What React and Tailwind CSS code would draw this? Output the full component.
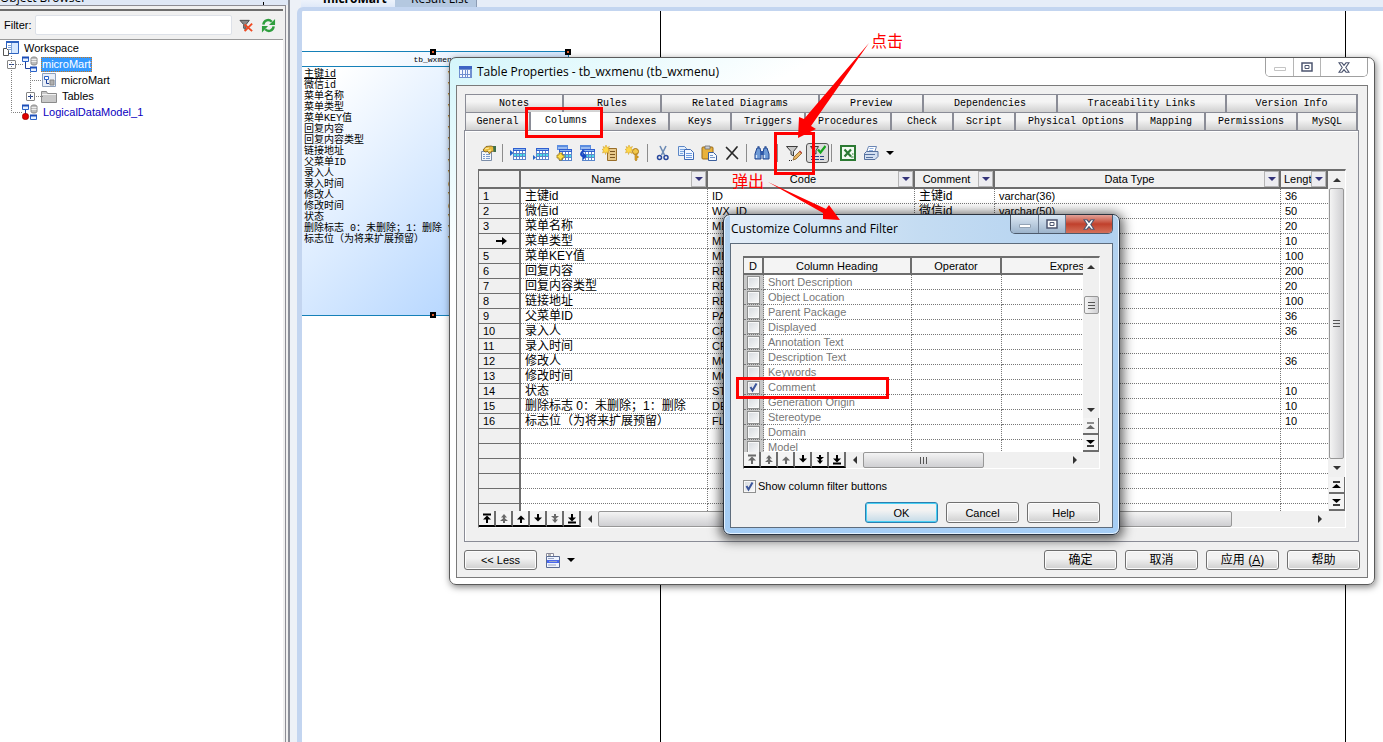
import { useState } from 'react'
import clsx from 'clsx'

const sans = "font-['Liberation_Sans','Noto_Sans_CJK_SC',sans-serif]"
const mono = "font-['Liberation_Mono','Noto_Sans_CJK_SC',monospace]"
const title = "font-['Open_Sans','Noto_Sans_CJK_SC',sans-serif]"

const entityRows = [
  ['主键id', 'varchar(36)'],
  ['微信id', 'varchar(50)'],
  ['菜单名称', 'varchar(20)'],
  ['菜单类型', 'varchar(10)'],
  ['菜单KEY值', 'varchar(100)'],
  ['回复内容', 'varchar(200)'],
  ['回复内容类型', 'varchar(20)'],
  ['链接地址', 'varchar(100)'],
  ['父菜单ID', 'varchar(36)'],
  ['录入人', 'varchar(36)'],
  ['录入时间', 'datetime'],
  ['修改人', 'varchar(36)'],
  ['修改时间', 'datetime'],
  ['状态', 'varchar(10)'],
  ['删除标志 0：未删除；1：删除', 'varchar(10)'],
  ['标志位（为将来扩展预留）', 'varchar(10)'],
]

const codes = [
  'ID', 'WX_ID', 'MENU_NAME', 'MENU_TYPE', 'MENU_KEY', 'REPLY_CONTENT', 'REPLY_TYPE', 'RES_URL',
  'PARENT_ID', 'CREATOR', 'CREATE_TIME', 'MODIFIER', 'MODIFY_TIME', 'STATUS', 'DEL_FLAG', 'FLAG',
]
const lengths = ['36', '50', '20', '10', '100', '200', '20', '100', '36', '36', '', '36', '', '10', '10', '10']

const filterRows = [
  'Short Description', 'Object Location', 'Parent Package', 'Displayed', 'Annotation Text', 'Description Text',
  'Keywords', 'Comment', 'Generation Origin', 'Stereotype', 'Domain', 'Model',
]

const topTabs = ['Notes', 'Rules', 'Related Diagrams', 'Preview', 'Dependencies', 'Traceability Links', 'Version Info']
const bottomTabs = [
  'General', 'Columns', 'Indexes', 'Keys', 'Triggers', 'Procedures', 'Check', 'Script',
  'Physical Options', 'Mapping', 'Permissions', 'MySQL',
]

function Svg({ children, size = 16 }) {
  return (
    <svg width={size} height={size} viewBox="0 0 16 16" className="block shrink-0" fill="none">
      {children}
    </svg>
  )
}

function GridShape({ x = 0, y = 0, w = 13, h = 12, fill = '#fff' }) {
  return (
    <g shapeRendering="crispEdges">
      <rect x={x} y={y} width={w} height={h} fill="#5a86cc" />
      <rect x={x} y={y} width={w} height={3} fill="#2f5fd0" />
      <rect x={x + 1} y={y + 1} width={w - 2} height={1} fill="#8db8f0" />
      {[0, 1, 2].map((r) =>
        [0, 1, 2, 3].map((c) => (
          <rect key={`${r}-${c}`} x={x + 1 + c * 3} y={y + 3 + r * 3} width={2} height={2} fill={r === 1 ? fill : '#fff'} />
        ))
      )}
    </g>
  )
}

const star = 'M4 0l1 2.5L7.500 1.500 6 4l2 1-2 1 1 2.500L4.500 7 3.500 9.500 3 7 .5 8l1-2.500L0 4.500l2-.8L1 1.500l2 1z'

const icons = {
  table: (
    <g shapeRendering="crispEdges">
      <rect x="1" y="2" width="14" height="13" fill="#6f8fd0" />
      <rect x="1" y="2" width="14" height="3" fill="#3c64c4" />
      {[6, 9, 12].map((y) => [2, 5, 8, 11].map((x) => <rect key={`${x}-${y}`} x={x} y={y} width="2" height="2" fill="#f4f8ff" />))}
    </g>
  ),
  props: (
    <>
      <path d="M1.500 6.500h10v9h-10z" fill="#f4f7fb" stroke="#7b8da8" />
      <path d="M3 9.500h2M6 9.500h4M3 11.500h2M6 11.500h4M3 13.500h2M6 13.500h4" stroke="#7c9ccc" />
      <path d="M3 5l3-3.500 5-.5 3.500 1v4l-3 .5-2 2.500L8 6.500 5 7z" fill="#e8b93a" stroke="#7a5a14" strokeWidth=".8" />
      <path d="M5 4l4-1M8 6l3-1" stroke="#fff0a8" />
      <path d="M13 1h3v6h-2.500z" fill="#3f6f4a" />
    </>
  ),
  insert: (
    <>
      <GridShape x={3} y={3} fill="#4fe0e8" />
      <path d="M0 5l3.500 3L0 11z" fill="#2463c8" />
    </>
  ),
  append: (
    <>
      <GridShape x={3} y={3} fill="#4fe0e8" />
      <path d="M0 10l3 2.500L0 15z" fill="#2463c8" />
    </>
  ),
  addCols: (
    <>
      <path d="M1 0h11v5H1z" fill="#5b8de0" />
      <path d="M2 3h9" stroke="#dceaff" />
      <GridShape x={3} y={4} fill="#4fe0e8" />
      <path d="M3 8h3v2h2v3H6v2H3v-2H1v-3h2z" fill="#ffe14a" stroke="#9a7410" strokeWidth=".8" />
    </>
  ),
  replicate: (
    <>
      <path d="M1 0h11v5H1z" fill="#5b8de0" />
      <path d="M2 3h9" stroke="#dceaff" />
      <GridShape x={3} y={4} fill="#4fe0e8" />
      <path d="M5 5C0 6 0 12 4 12v3l4-4-4-3.500v2.500C2.500 10 3 7 6 7z" fill="#1a49c4" />
    </>
  ),
  newDomain: (
    <>
      <path d="M6.500 3.500h8v12h-9v-8z" fill="#e7c98c" stroke="#9a6f2a" />
      <path d="M8 6.500h5M8 9.500h5M8 12.500h5" stroke="#7a5520" />
      <path d={star} fill="#ffd94a" stroke="#d09a18" strokeWidth=".5" />
    </>
  ),
  newKey: (
    <>
      <circle cx="10.500" cy="6.500" r="3" fill="#f2c84a" stroke="#a8761a" />
      <path d="M10 9h2v6l-1 1-1-1z" fill="#e0a92a" stroke="#a8761a" strokeWidth=".6" />
      <path d="M12 11h1.500v2H12z" fill="#c8901a" />
      <path d={star} fill="#ffd94a" stroke="#d09a18" strokeWidth=".5" />
    </>
  ),
  cut: (
    <>
      <path d="M5 1l4.500 9M11 1L6.500 10" stroke="#6d8bb5" strokeWidth="1.600" />
      <circle cx="4.500" cy="12.500" r="2" stroke="#27479c" strokeWidth="1.500" />
      <circle cx="11" cy="12.500" r="2" stroke="#27479c" strokeWidth="1.500" />
    </>
  ),
  copy: (
    <>
      <path d="M.5 1.500h6l2 2v7h-8z" fill="#e4effd" stroke="#5d87c6" />
      <path d="M2 4.500h4M2 6.500h4M2 8.500h3" stroke="#7ba6e0" />
      <path d="M6.500 4.500h6l3 3v7h-9z" fill="#f2f7ff" stroke="#3c69b4" />
      <path d="M8 8.500h6M8 10.500h6M8 12.500h6" stroke="#6f9ce0" />
    </>
  ),
  paste: (
    <>
      <rect x="1" y="2" width="11" height="12" rx="1" fill="#e9b23c" stroke="#9b6a16" />
      <path d="M4 1h5v3H4z" fill="#c9ced6" stroke="#6c6c6c" strokeWidth=".8" />
      <path d="M7.500 7.500h5l3 3v5h-8z" fill="#f3f8ff" stroke="#3c5f9c" />
      <path d="M9 10.500h3M9 12.500h5" stroke="#7596c8" />
    </>
  ),
  remove: <path d="M2.500 2.500l11 11M13 2L3 14" stroke="#2a2a2a" strokeWidth="1.700" strokeLinecap="round" />,
  find: (
    <>
      <path d="M3 3h3l1 5v6H1V9zM10 3h3l2 6v5H9V8z" fill="#6e9ad6" stroke="#1f4590" />
      <path d="M6.500 6h3v4h-3z" fill="#2d57a8" />
      <path d="M3.500 2h2M10.500 2h2" stroke="#1f4590" strokeWidth="1.500" />
      <path d="M2.500 10v3M10.500 10v3" stroke="#d7e7fb" strokeWidth="1.300" />
    </>
  ),
  filterEdit: (
    <>
      <path d="M.5 1.500h11L7.500 6.500V11L5 9.500v-3z" fill="#c8c8c8" stroke="#3c3c3c" />
      <path d="M14 6l2 2-6 6-3 1 1-3z" fill="#e9b765" stroke="#8a5a1a" strokeWidth=".8" />
      <path d="M13.500 6l2 2" stroke="#c04848" strokeWidth="1.500" />
      <path d="M3 15.500h1M5 15.500h1" stroke="#222" />
    </>
  ),
  filterOn: (
    <>
      <path d="M.5 1.500h8L6 5.500V9L3.500 8V5.500z" fill="#c8c8c8" stroke="#3c3c3c" />
      <path d="M8 4.500l2.500 3L15.500 1" stroke="#16a51c" strokeWidth="2.200" />
      <path d="M1 11.500h3M5 11.500h4M10 11.500h4M1 14.500h3M5 14.500h4M10 14.500h4" stroke="#2b4684" />
    </>
  ),
  excel: (
    <>
      <rect x="1" y="1" width="14" height="14" fill="#f3faf2" stroke="#2c7a33" strokeWidth="2" />
      <path d="M4.500 4.500l6.500 7M11 4.500l-6.500 7" stroke="#2c7a33" strokeWidth="2.200" />
      <path d="M11 12h2.500M12 9h1.500" stroke="#2c7a33" />
    </>
  ),
  print: (
    <>
      <path d="M5.500 1.500h8l-2 6h-8z" fill="#fff" stroke="#6b86b4" />
      <path d="M6.500 3.500h4M6 5.500h4" stroke="#8fb0e0" />
      <path d="M1.500 8.500l2-2h11.500v5l-3 3h-10.500z" fill="#d3dff1" stroke="#55719f" />
      <path d="M2 9.500h10M3 12.500h7" stroke="#55719f" />
    </>
  ),
  model: (
    <>
      <path d="M9 2.500c0-2 6-2 6 0v5c0 2-6 2-6 0z" fill="#bdbdbd" stroke="#8a8a8a" />
      <path d="M9.500 3.500h5M9.500 5.500h5" stroke="#eee" />
      <path d="M.5 1.500h6v4h-6zM8.500 11.500h6v4h-6z" fill="#e8f2ff" stroke="#2a62c8" />
      <path d="M0 1.500h7M8 11.500h7" stroke="#1e4fb8" strokeWidth="2" />
      <path d="M3.500 6v6.500H8" stroke="#1e3f98" />
    </>
  ),
  logical: (
    <>
      <path d="M9 2.500c0-2 6-2 6 0v5c0 2-6 2-6 0z" fill="#bdbdbd" stroke="#8a8a8a" />
      <path d="M9.500 3.500h5M9.500 5.500h5" stroke="#eee" />
      <path d="M.5 1.500h6v4h-6zM8.500 11.500h6v4h-6z" fill="#e8f2ff" stroke="#2a62c8" />
      <path d="M0 1.500h7M8 11.500h7" stroke="#1e4fb8" strokeWidth="2" />
      <path d="M3.500 6v4" stroke="#1e3f98" />
      <circle cx="3.500" cy="12.500" r="3.200" fill="#e00000" stroke="#8a0000" strokeWidth=".6" />
    </>
  ),
  workspace: (
    <>
      <path d="M3.500 1.500h12v12h-12z" fill="#d6e8ff" stroke="#2e63c0" />
      <path d="M3 2h13" stroke="#2e63c0" strokeWidth="2" />
      <path d="M4 3h4v10H4z" fill="#fff" />
      <path d="M5 5.500h3M5 7.500h3M5 9.500h3M8.500 3v10" stroke="#7ea3d8" />
      <path d="M.5 8.500h3l2 2v5h-5z" fill="#fff" stroke="#555" />
    </>
  ),
  diagram: (
    <>
      <path d="M1.500 1.500h13v13h-13z" fill="#e9eff8" stroke="#8da0bc" />
      <path d="M3.500 4.500h4v3h-4z" fill="#fff" stroke="#2a62c8" />
      <path d="M5.500 8v3.500H8" stroke="#1e3f98" />
      <path d="M9 8h4v5H9z" fill="#b0b0b0" stroke="#888" />
    </>
  ),
  folder: (
    <>
      <path d="M.5 3.500h5l1 2h9v9h-15z" fill="#c9c9c9" stroke="#8b8b8b" />
      <path d="M1 6.500h14" stroke="#f2f2f2" />
    </>
  ),
  filterClear: (
    <>
      <path d="M1 2.500h10L7.500 7v6L5 11V7z" fill="#8a8a8a" stroke="#444" />
      <path d="M6 7l8 7M14 6l-8 8" stroke="#f04a22" strokeWidth="2" />
    </>
  ),
  refresh: (
    <>
      <path d="M2.500 7C3 2.500 8 .5 11.500 4" stroke="#2f9e3e" strokeWidth="2.600" />
      <path d="M15 1v6.500H8.500z" fill="#2f9e3e" />
      <path d="M13.500 9c-.5 4.500-5.500 6.500-9 3" stroke="#2f9e3e" strokeWidth="2.600" />
      <path d="M1 15.500V8.500h6.500z" fill="#2f9e3e" />
    </>
  ),
  menu: (
    <>
      <path d="M1.500 1.500h7v3h-7z" fill="#fff" stroke="#8a8a9a" />
      <path d="M1.500 4.500h13v11h-13z" fill="#eef3ff" stroke="#5a6c94" />
      <path d="M2 9.500h12" stroke="#4a68f0" strokeWidth="3" />
      <path d="M3 6.500h6M4 9.500h8M3 13h8" stroke="#9aa6c4" />
      <path d="M3 3h3" stroke="#666" />
    </>
  ),
}

function Icon({ name, size }) {
  return <Svg size={size}>{icons[name]}</Svg>
}

// filled triangle, points down unless told otherwise
function Caret({ dir = 'down', color = '#333' }) {
  const d = { down: 'M0 2h8l-4 4z', up: 'M0 6h8l-4-4z', left: 'M6 0v8l-4-4z', right: 'M2 0v8l4-4z' }[dir]
  return (
    <svg width="8" height="8" viewBox="0 0 8 8" className="block shrink-0">
      <path d={d} fill={color} />
    </svg>
  )
}

const navPaths = {
  first: 'M1 1.500h8M5 10V6',
  pageUp: 'M5 10V3',
  up: 'M5 10V5',
  down: 'M5 1v5',
  pageDown: 'M5 1v7',
  last: 'M1 9.500h8M5 1v4',
}
const navHeads = {
  first: 'M1 6.500h8L5 2.500z',
  pageUp: 'M2 4.500h6L5 1zM1 8h8L5 4.500z',
  up: 'M1 6.500h8L5 2.500z',
  down: 'M1 4.500h8L5 8.500z',
  pageDown: 'M1 3h8L5 6.500zM2 6.500h6L5 10z',
  last: 'M1 4.500h8L5 8.500z',
}

function NavButton({ kind, dim }) {
  const color = dim ? '#6a6a6a' : '#000'
  return (
    <button
      aria-label={kind}
      className="flex h-4 w-[17px] shrink-0 items-center justify-center border-r-2 border-b-2 border-[#6d6d6d] border-b-black bg-[#f4f4f4]"
    >
      <svg width="10" height="11" viewBox="0 0 10 11">
        <path d={navPaths[kind]} stroke={color} strokeWidth="2" />
        <path d={navHeads[kind]} fill={color} />
      </svg>
    </button>
  )
}

function JumpButton({ dir, dim }) {
  const color = dim ? '#6a6a6a' : '#000'
  return (
    <button
      aria-label={dir}
      className="flex h-[17px] w-4 shrink-0 items-center justify-center border-r border-b-2 border-[#6d6d6d] bg-[#f4f4f4]"
    >
      <svg width="9" height="8" viewBox="0 0 9 8">
        <path d={dir === 'top' ? 'M1 1h7' : 'M1 7h7'} stroke={color} strokeWidth="1.500" />
        <path d={dir === 'top' ? 'M0 7h9L4.500 3z' : 'M0 1h9L4.500 5z'} fill={color} />
      </svg>
    </button>
  )
}

function Grip({ vertical }) {
  return (
    <svg width="9" height="9" viewBox="0 0 9 9" className={vertical ? '' : 'rotate-90'}>
      <path d="M1 1.500h7M1 4.500h7M1 7.500h7" stroke="#555" />
    </svg>
  )
}

function NavBar({ dims = [], children }) {
  return (
    <div className="flex h-4 min-w-0 bg-[#f0f0f0]">
      {['first', 'pageUp', 'up', 'down', 'pageDown', 'last'].map((k, i) => (
        <NavButton key={k} kind={k} dim={dims.includes(i)} />
      ))}
      {children}
    </div>
  )
}

function PushButton({ children, primary }) {
  return (
    <button
      className={clsx(
        'flex w-[73px] items-center justify-center rounded-[3px] border bg-linear-to-b from-[#f2f2f2] from-40%',
        primary
          ? 'border-[#2c7fb0] to-[#c4dbe8] shadow-[inset_0_0_0_1px_#48d0f4]'
          : 'border-[#707070] to-[#cfcfcf] shadow-[inset_0_0_0_1px_#fcfcfc]'
      )}
    >
      {children}
    </button>
  )
}

function Check({ id, label, defaultChecked }) {
  return (
    <span className="relative block size-[13px] shrink-0">
      <input
        id={id}
        type="checkbox"
        aria-label={label}
        defaultChecked={defaultChecked}
        className="peer block size-[13px] appearance-none border border-[#8e8f8f] bg-linear-to-br from-[#d5d9de] to-[#fafafa] shadow-[inset_0_0_0_1px_#f8f8f8]"
      />
      <svg viewBox="0 0 13 13" className="pointer-events-none absolute inset-0 hidden peer-checked:block">
        <path d="M3.500 6l2 3.500L9.500 2.500" stroke="#3b559b" strokeWidth="2" fill="none" />
      </svg>
    </span>
  )
}

function CaptionButtons({ danger }) {
  const cell = 'flex items-center justify-center border-r'
  return (
    <div
      className={clsx(
        'flex h-[19px] self-start overflow-hidden rounded-b-[5px] border border-t-0',
        danger ? 'border-[#4c5a6c]' : 'border-[#a0a0a0]'
      )}
    >
      <button
        aria-label="Minimize"
        className={clsx(cell, 'w-7', danger ? 'border-[#6a7a90] bg-linear-to-b from-[#dce8f4] to-[#9db4cc]' : 'border-[#b5b5b5] bg-white')}
      >
        <svg width="12" height="4" className="mt-1"><path d="M.5.5h11v3H.5z" fill="#fff" stroke={danger ? '#93a3b5' : '#c4c4c4'} /></svg>
      </button>
      <button
        aria-label="Maximize"
        className={clsx(cell, 'w-[27px]', danger ? 'border-[#6a7a90] bg-linear-to-b from-[#dce8f4] to-[#9db4cc]' : 'border-[#b5b5b5] bg-white')}
      >
        <svg width="12" height="10"><path d="M1 1h10v8H1z" fill="#fff" stroke="#4d5670" strokeWidth="1.500" /><path d="M4 3.500h4v3H4z" stroke="#4d5670" fill="none" /></svg>
      </button>
      <button
        aria-label="Close"
        className={clsx('flex w-[46px] items-center justify-center', danger ? 'bg-linear-to-b from-[#e2a198] via-[#c0402c] to-[#d4705a]' : 'bg-white')}
      >
        <svg width="12" height="11" viewBox="0 0 12 11">
          <path d="M1 .8h3l2 2.500L8 .8h3L7.800 5.500 11 10.200H8L6 7.700l-2 2.500H1L4.200 5.500z" fill="#fff" stroke="#4d5670" strokeWidth="1.100" />
        </svg>
      </button>
    </div>
  )
}

function TreeRow({ children, pad }) {
  return <li className={clsx('flex h-4 items-center', pad)}>{children}</li>
}

function Expander({ open }) {
  return (
    <button aria-label={open ? 'Collapse' : 'Expand'} className="flex size-[9px] shrink-0 items-center justify-center rounded-[1px] border border-[#848484] bg-white">
      <svg width="7" height="7">
        <path d={open ? 'M1 3.500h5' : 'M1 3.500h5M3.500 1v5'} stroke="#23408c" />
      </svg>
    </button>
  )
}

function ObjectBrowser() {
  return (
    <aside className="flex w-[290px] shrink-0 flex-col border-r-2 border-[#8a8e98] bg-[#f0f0f0]">
      <div className={`flex h-[5px] items-end justify-between overflow-hidden bg-[#dfe8f6] ${title}`}>
        <span className="text-xs leading-[14px]">Object Browser</span>
        <span className="mr-6 h-[3px] w-px bg-black" />
      </div>
      <div className="mr-[2px] flex flex-1 flex-col border-t border-r border-[#8c8c94] pt-[3px] pr-[2px]">
        <div className="flex h-[31px] items-center border-t-2 border-b border-[#6d6d6d] border-b-[#9a9a9a] pl-1">
          <label htmlFor="filter" className="w-[31px]">Filter:</label>
          <input id="filter" className="h-5 w-[197px] rounded-[2px] border border-[#dde1e8] bg-white px-1" />
          <button aria-label="Clear filter" className="ml-[7px]"><Icon name="filterClear" size={15} /></button>
          <button aria-label="Refresh" className="ml-[7px]"><Icon name="refresh" size={15} /></button>
        </div>
        <ul className="relative flex-1 bg-white">
          {/* dotted guides of the tree */}
          <svg className="pointer-events-none absolute top-4 left-0" width="60" height="64" fill="none" stroke="#808080" strokeDasharray="1 1">
            <path d="M11.500 0v56.500H22M16 8.500h8M30.500 16v24.500M30 24.500h12M36 40.500h8" />
          </svg>
          <TreeRow pad="pl-[3px] gap-[5px]"><Icon name="workspace" />Workspace</TreeRow>
          <TreeRow pad="pl-[7px]">
            <Expander open />
            <span className="ml-[6px]"><Icon name="model" /></span>
            <span className="ml-[3px] h-[15px] border border-dotted border-[#c87820] bg-[#3399ff] leading-[13px] text-white">microMart</span>
          </TreeRow>
          <TreeRow pad="pl-[41px] gap-1"><Icon name="diagram" />microMart</TreeRow>
          <TreeRow pad="pl-[26px]">
            <Expander />
            <span className="ml-[6px]"><Icon name="folder" /></span>
            <span className="ml-[5px]">Tables</span>
          </TreeRow>
          <TreeRow pad="pl-[22px] gap-[5px]">
            <Icon name="logical" />
            <a href="#logical" className="text-[#0a00c0]">LogicalDataModel_1</a>
          </TreeRow>
        </ul>
      </div>
    </aside>
  )
}

function Handle({ className }) {
  return <span className={clsx('absolute flex h-[6px] w-[6px] bg-black', className)}><i className="m-auto size-[2px] bg-[#e06030]" /></span>
}

function Entity() {
  return (
    <section className={`absolute top-10 left-0 h-[265px] w-[267px] border-y border-r border-[#1580b8] bg-linear-to-br from-white from-10% to-[#a0caff] text-[10px] ${mono}`}>
      <Handle className="-top-[3px] left-[128px]" />
      <Handle className="-top-[3px] -right-[3px]" />
      <Handle className="-bottom-[3px] left-[128px]" />
      <h2 className="h-[15px] border-b border-[#1580b8] text-center text-[8px] leading-[15px]">tb_wxmenu</h2>
      <div className="pt-[2px]">
        {entityRows.map(([name, type], i) => (
          <div key={name} className="flex h-[11px] pl-[2px] leading-[11px]">
            <span className="w-36 whitespace-nowrap"><span className={i === 0 ? 'underline' : ''}>{name}</span></span>
            <span>{type}</span>
          </div>
        ))}
      </div>
    </section>
  )
}

function Workbook() {
  return (
    <main className="flex min-w-0 flex-1 flex-col bg-[#edf1f7] pl-[7px]">
      <div className={`flex h-[7px] items-end overflow-hidden text-xs leading-[16px] ${title}`}>
        <span className="ml-1 w-[94px] bg-linear-to-b from-white to-[#dfe9f8] pl-[22px] font-bold">microMart</span>
        <span className="w-[82px] border-r border-[#8c9cb4] bg-[#b4c8e0] pl-4">Result List</span>
        <span className="h-full flex-1 bg-[#e6edf8]" />
      </div>
      <div className="relative flex-1 overflow-hidden rounded-tl-[6px] border-t-4 border-l-[5px] border-[#c3d5f0] bg-white">
        <div className="flex h-full">
          <div className="w-[359px] border-r border-black" />
          <div className="w-[685px] border-r border-black" />
        </div>
        <Entity />
      </div>
    </main>
  )
}

function Tab({ label, active, onClick }) {
  return (
    <button
      onClick={onClick}
      className={clsx(
        'overflow-hidden border-t border-r-2 border-[#8a8c96] leading-[18px] whitespace-nowrap',
        active ? 'border-t-0 bg-white pb-1' : 'bg-linear-to-b from-[#f4f4f4] from-40% to-[#d0d0d0]'
      )}
    >
      {label}
    </button>
  )
}

function Separator() {
  return <span className="mx-[3px] h-[18px] w-px shrink-0 bg-[#8c8c8c]" />
}

function Tool({ name }) {
  return <button aria-label={name} className="flex w-[23px] shrink-0 justify-center"><Icon name={name} /></button>
}

function Toolbar() {
  return (
    <div className="-ml-[2px] mb-1 flex h-6 items-center">
      <Tool name="props" />
      <Separator />
      {['insert', 'append', 'addCols', 'replicate', 'newDomain', 'newKey'].map((n) => <Tool key={n} name={n} />)}
      <Separator />
      {['cut', 'copy', 'paste', 'remove'].map((n) => <Tool key={n} name={n} />)}
      <Separator />
      <Tool name="find" />
      <span className="mx-1 h-[18px] w-px bg-[#8c8c8c]" />
      <Tool name="filterEdit" />
      <button aria-label="filterOn" className="mx-px flex h-5 w-[23px] items-center justify-center rounded-[3px] border border-[#555] bg-[#dcdcdc]"><Icon name="filterOn" /></button>
      <span className="mr-1 ml-px h-[18px] w-px bg-[#8c8c8c]" />
      <Tool name="excel" />
      <Tool name="print" />
      <button aria-label="Print options" className="ml-1"><Caret color="#000" /></button>
    </div>
  )
}

function HeadCell({ children, filter = true }) {
  return (
    <th className="border-r-2 border-b-2 border-[#6d6d6d] bg-[#f0f0f0] p-0 font-normal">
      <div className="flex h-4 items-center overflow-hidden">
        <span className="min-w-0 flex-1 overflow-hidden px-[3px] text-center">{children}</span>
        {filter && (
          <button aria-label={`Filter ${children}`} className="flex h-4 w-[15px] shrink-0 items-center justify-center border border-[#b4b4b4] bg-[#ececf0]">
            <Caret color="#33337a" />
          </button>
        )}
      </div>
    </th>
  )
}

function ColumnsGrid() {
  const cell = 'overflow-hidden border-r border-b border-dotted border-[#777] p-0 pl-1 whitespace-nowrap'
  return (
    <div className="border-t-2 border-r border-b border-l border-[#6d6d6d] border-r-white border-b-white">
      <div className="flex h-[340px]">
        <div className="min-w-0 flex-1 overflow-hidden bg-white">
          <table className="w-full table-fixed border-separate border-spacing-0">
            <colgroup>
              <col className="w-[42px]" />
              <col className="w-[187px]" />
              <col className="w-[207px]" />
              <col className="w-[80px]" />
              <col />
              <col className="w-[47px]" />
            </colgroup>
            <thead>
              <tr className="h-[18px]">
                <HeadCell filter={false} />
                <HeadCell>Name</HeadCell>
                <HeadCell>Code</HeadCell>
                <HeadCell>Comment</HeadCell>
                <HeadCell>Data Type</HeadCell>
                <HeadCell>Lengt</HeadCell>
              </tr>
            </thead>
            <tbody>
              {Array.from({ length: 22 }, (_, i) => {
                const [name, type] = entityRows[i] || []
                return (
                  <tr key={i} className="h-[15px] leading-[14px]">
                    <th className="border-r-2 border-b border-[#6d6d6d] bg-[#f0f0f0] p-0 pl-1 text-left font-normal">
                      {i === 3 ? (
                        <svg width="11" height="8" viewBox="0 0 11 8" className="ml-[13px]"><path d="M0 3h6V0l5 4-5 4V5H0z" /></svg>
                      ) : (
                        name && i + 1
                      )}
                    </th>
                    <td className={clsx(cell, 'text-xs leading-[14px]')}>{name}</td>
                    <td className={cell}>{codes[i]}</td>
                    <td className={clsx(cell, 'text-xs leading-[14px]')}>{name}</td>
                    <td className={cell}>{type}</td>
                    <td className={clsx(cell, 'border-r-0')}>{lengths[i]}</td>
                  </tr>
                )
              })}
            </tbody>
          </table>
        </div>
        <div className="flex w-[17px] flex-col items-center bg-[#f0f0f0]">
          <span className="flex h-[17px] items-center"><Caret dir="up" /></span>
          <div className="flex w-[15px] flex-1 items-center justify-center rounded-[2px] border border-[#979797] bg-linear-to-r from-[#f4f4f4] to-[#cfcfd2]"><Grip vertical /></div>
          <span className="flex h-[18px] items-center"><Caret /></span>
          <JumpButton dir="top" />
          <JumpButton dir="bottom" />
        </div>
      </div>
      <NavBar dims={[1, 4]}>
        <span className="flex w-[17px] items-center justify-center"><Caret dir="left" /></span>
        <div className="w-[634px] rounded-[2px] border border-[#979797] bg-linear-to-b from-[#f4f4f4] to-[#cfcfd2]" />
        <span className="mr-[21px] ml-auto flex items-center"><Caret dir="right" /></span>
      </NavBar>
    </div>
  )
}

function PropertiesWindow() {
  const [tab, setTab] = useState('Columns')
  return (
    <section
      className="absolute top-[57px] right-2 left-[449px] rounded-[7px] border border-[#5a5a5a] bg-linear-to-br from-[#d4f6fb] via-white via-20% to-white px-[6px] pb-[6px] shadow-[1px_2px_7px_rgba(0,0,0,0.5)]"
    >
      <header className="flex h-[27px] items-center">
        <span className="ml-[2px]"><Icon name="table" size={15} /></span>
        <h1 className={`ml-1 flex-1 text-xs ${title}`}>Table Properties - tb_wxmenu (tb_wxmenu)</h1>
        <CaptionButtons />
      </header>
      <div className="border border-[#7a7a7a] bg-[#f0f0f0] px-[7px] pt-2 pb-[7px]">
        <nav className={`mr-[2px] ml-px border-l border-[#8a8c96] text-[10px] ${mono}`}>
          <div className="grid h-[18px] grid-cols-[98fr_98fr_158fr_104fr_134fr_169fr_131fr]">
            {topTabs.map((t) => <Tab key={t} label={t} active={tab === t} onClick={() => setTab(t)} />)}
          </div>
          <div className="grid h-[18px] grid-cols-[65fr_72fr_67fr_62fr_74fr_86fr_62fr_62fr_122fr_68fr_92fr_60fr]">
            {bottomTabs.map((t) => <Tab key={t} label={t} active={tab === t} onClick={() => setTab(t)} />)}
          </div>
        </nav>
        <div className="mr-px border border-[#8a8c96] pt-[10px] pr-3 pb-[13px] pl-[13px] shadow-[inset_1px_1px_0_#fff]">
          <Toolbar />
          <ColumnsGrid />
        </div>
        <footer className="mt-2 flex h-5 items-stretch gap-2">
          <PushButton>&lt;&lt; Less</PushButton>
          <button aria-label="Menu" className="flex items-center gap-[6px]"><Icon name="menu" /><Caret color="#000" /></button>
          <div className="ml-auto flex gap-2 text-xs">
            <PushButton>确定</PushButton>
            <PushButton>取消</PushButton>
            <PushButton>应用 (<u>A</u>)</PushButton>
            <PushButton>帮助</PushButton>
          </div>
        </footer>
      </div>
    </section>
  )
}

function FilterDialog() {
  const head = 'border-r-2 border-b-2 border-[#6d6d6d] bg-[#f4f4f4] p-0 font-normal'
  const cell = 'border-r border-b border-dotted border-[#777] p-0 pl-1 text-[#777]'
  return (
    <section
      className="absolute top-[214px] left-[723px] w-[397px] rounded-[7px] border border-[#2c3440] bg-linear-to-b from-[#b4d2ee] to-[#a5cdf5] px-[6px] pb-[6px] shadow-[0_2px_12px_3px_rgba(0,0,0,0.65),inset_0_0_0_1px_#e4f2ff]"
    >
      <header className="flex h-7 items-center bg-linear-to-r from-[#e4eef8] via-[#c4dcf2] to-[#b0d0f0]">
        <h2 className={`ml-px flex-1 text-xs ${title}`}>Customize Columns and Filter</h2>
        <CaptionButtons danger />
      </header>
      <div className="border border-[#5e6c7c] bg-[#f0f0f0] px-3 pt-3 pb-1">
        <div className="border-t-2 border-r border-b border-l border-[#6d6d6d] border-r-white border-b-white">
          <div className="flex h-[194px]">
            <div className="min-w-0 flex-1 overflow-hidden bg-white">
              <table className="w-[410px] table-fixed border-separate border-spacing-0">
                <colgroup>
                  <col className="w-[20px]" />
                  <col className="w-[148px]" />
                  <col className="w-[90px]" />
                  <col className="w-[152px]" />
                </colgroup>
                <thead>
                  <tr className="h-[17px]">
                    <th className={head}>D</th>
                    <th className={head}>Column Heading</th>
                    <th className={head}>Operator</th>
                    <th className={head}>Expression</th>
                  </tr>
                </thead>
                <tbody>
                  {filterRows.map((r) => (
                    <tr key={r} className="h-[15px] leading-[14px]">
                      <td className="border-r border-b border-dotted border-[#777] bg-[#c8c8c8] p-0 pl-[3px]">
                        <Check label={r} defaultChecked={r === 'Comment'} />
                      </td>
                      <td className={cell}>{r}</td>
                      <td className={cell} />
                      <td className={cell} />
                    </tr>
                  ))}
                </tbody>
              </table>
            </div>
            <div className="flex w-4 flex-col items-center bg-[#f0f0f0]">
              <span className="flex h-[17px] items-center"><Caret dir="up" /></span>
              <div className="mt-[21px] flex h-[18px] w-[15px] items-center justify-center rounded-[2px] border border-[#979797] bg-linear-to-r from-[#f4f4f4] to-[#cfcfd2]"><Grip vertical /></div>
              <span className="mt-auto flex h-[17px] items-center"><Caret /></span>
              <JumpButton dir="top" dim />
              <JumpButton dir="bottom" />
            </div>
          </div>
          <NavBar dims={[0, 1, 2]}>
            <span className="flex w-[17px] items-center justify-center"><Caret dir="left" /></span>
            <div className="flex w-[121px] items-center justify-center rounded-[2px] border border-[#979797] bg-linear-to-b from-[#f4f4f4] to-[#cfcfd2]"><Grip /></div>
            <span className="mr-5 ml-auto flex items-center"><Caret dir="right" /></span>
          </NavBar>
        </div>
        <div className="mt-[10px] flex items-center gap-[2px]">
          <Check id="show-filter" defaultChecked />
          <label htmlFor="show-filter">Show column filter buttons</label>
        </div>
        <div className="mt-[9px] flex h-[21px] items-stretch justify-end gap-2">
          <PushButton primary>OK</PushButton>
          <PushButton>Cancel</PushButton>
          <PushButton>Help</PushButton>
        </div>
      </div>
    </section>
  )
}

function Notes() {
  return (
    <div className="pointer-events-none absolute inset-0 text-base leading-5 text-[#f00]">
      <span className="absolute top-[107px] left-[525px] h-[31px] w-[78px] border-3 border-[#f00]" />
      <span className="absolute top-[132px] left-[774px] h-[43px] w-[41px] border-3 border-[#f00]" />
      <span className="absolute top-[377px] left-[736px] h-[22px] w-[153px] border-3 border-[#f00]" />
      <svg className="absolute top-0 left-0" width="920" height="240" fill="#f00">
        <path d="M869 43L804 119l-5-2-1 21 18-9-5-3z" />
        <path d="M768 182l55 31v6l17 1-11-15-3 4z" />
      </svg>
      <span className="absolute top-8 left-[871px]">点击</span>
      <span className="absolute top-[172px] left-[732px]">弹出</span>
    </div>
  )
}

export default function App() {
  return (
    <div className={`relative flex h-screen w-full overflow-hidden bg-white text-[11px] leading-[14px] text-black ${sans}`}>
      <ObjectBrowser />
      <Workbook />
      <PropertiesWindow />
      <FilterDialog />
      <Notes />
    </div>
  )
}
